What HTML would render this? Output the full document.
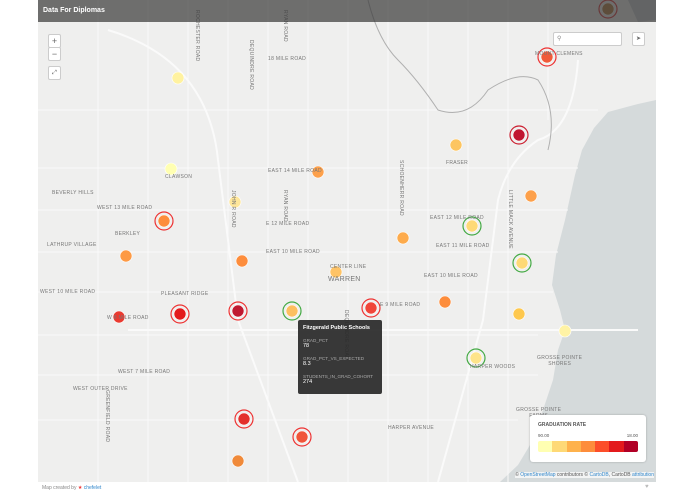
<!DOCTYPE html>
<html><head><meta charset="utf-8"><style>
*{margin:0;padding:0;box-sizing:border-box}
body{width:695px;height:494px;background:#fff;font-family:"Liberation Sans",sans-serif;position:relative;overflow:hidden}
#map{position:absolute;left:38px;top:0;width:618px;height:482px;background:#efefee;overflow:hidden}
#ov{position:absolute;left:0;top:0;width:656px;height:482px;overflow:hidden}
.lbl{position:absolute;font-size:5px;color:#777;letter-spacing:.3px;white-space:nowrap}
.v{writing-mode:vertical-rl}
#hdr{position:absolute;left:38px;top:0;width:618px;height:22px;background:rgba(60,60,60,.72);color:#fff;font-weight:bold;font-size:7px;padding:7px 5px}
.btn{position:absolute;background:#fff;border:1px solid #ccc;border-radius:2px;font-size:9px;color:#666;text-align:center;line-height:13px;width:13px;height:14px}
#tip{position:absolute;left:298px;top:320px;width:84px;height:74px;background:rgba(40,40,40,.92);border-radius:2px;color:#fff;font-size:5.5px;padding:5px 5px}
#tip .k{color:#aaa;font-size:4.6px;margin-top:7px}
#leg{position:absolute;left:530px;top:415px;width:116px;height:47px;background:#fff;border-radius:3px;box-shadow:0 0 2px rgba(0,0,0,.25);padding:7px 8px;font-size:5px;color:#555}
</style></head><body>
<div id="map">
<svg width="618" height="482" style="position:absolute;left:0;top:0">
<path d="M590 0 L618 0 L618 20 L600 22Z" fill="#c9cdcf"/>
<path d="M618 100 L600 104 L570 112 L556 128 L544 150 L537 175 L527 220 L518 255 L514 285 L522 310 L527 330 L520 350 L515 380 L505 410 L495 440 L480 465 L462 482 L618 482Z" fill="#d5dadb"/>
<g stroke="#fafafa" stroke-width="1" fill="none">
<path d="M0 110 H560 M0 168 H540 M0 210 H530 M0 252 H520 M0 292 H515 M0 335 H500 M0 375 H500 M0 420 H480"/>
<path d="M60 0 V482 M110 0V482 M150 0V482 M190 0V482 M230 0V482 M270 0V482 M310 0V482 M350 0V482 M390 0V482 M430 0V482 M470 0V482 M510 0V120"/>
<path d="M70 30 Q170 60 180 160 L200 320 L260 482" stroke-width="2"/>
<path d="M540 60 Q535 130 500 140 Q470 160 460 200 L445 320 L400 482" stroke-width="2"/>
<path d="M90 330 H380 L600 330" stroke-width="2"/>
</g>
<path d="M330 0 Q340 40 360 60 Q380 80 400 110 Q430 120 450 90 Q480 70 500 80 Q520 110 510 150" stroke="#b0b0b0" stroke-width="1" fill="none"/>
<g stroke-width="1.2">
<g fill="none"><circle cx="570" cy="9" r="9" stroke="#d33"/><circle cx="509" cy="57" r="9" stroke="#e33"/><circle cx="481" cy="135" r="9" stroke="#c23"/><circle cx="126" cy="221" r="9" stroke="#e33"/><circle cx="434" cy="226" r="9" stroke="#4a4"/><circle cx="484" cy="263" r="9" stroke="#4a4"/><circle cx="333" cy="308" r="9" stroke="#e33"/><circle cx="142" cy="314" r="9" stroke="#e33"/><circle cx="200" cy="311" r="9" stroke="#e33"/><circle cx="254" cy="311" r="9" stroke="#4a4"/><circle cx="438" cy="358" r="9" stroke="#4a4"/><circle cx="206" cy="419" r="9" stroke="#e33"/><circle cx="264" cy="437" r="9" stroke="#e33"/></g>
<g stroke="#fff" stroke-width=".6">
<circle cx="570" cy="9" r="6" fill="#b37a3a"/><circle cx="509" cy="57" r="6" fill="#f05a3a"/><circle cx="140" cy="78" r="6" fill="#fff2a0"/><circle cx="481" cy="135" r="6" fill="#c01530"/><circle cx="418" cy="145" r="6" fill="#fdc560"/><circle cx="133" cy="169" r="6" fill="#ffffb2"/><circle cx="280" cy="172" r="6" fill="#fda04a"/><circle cx="493" cy="196" r="6" fill="#fda04a"/><circle cx="197" cy="202" r="6" fill="#fee69a"/><circle cx="126" cy="221" r="6" fill="#fd8d3c"/><circle cx="434" cy="226" r="6" fill="#fed976"/><circle cx="365" cy="238" r="6" fill="#fdab4c"/><circle cx="88" cy="256" r="6" fill="#fd9a45"/><circle cx="204" cy="261" r="6" fill="#fd8d3c"/><circle cx="484" cy="263" r="6" fill="#fed976"/><circle cx="298" cy="272" r="6" fill="#fec366"/><circle cx="407" cy="302" r="6" fill="#fd8d3c"/><circle cx="333" cy="308" r="6" fill="#f0463a"/><circle cx="81" cy="317" r="6" fill="#ea3a30"/><circle cx="142" cy="314" r="6" fill="#e31a1c"/><circle cx="200" cy="311" r="6" fill="#c01a30"/><circle cx="254" cy="311" r="6" fill="#fdbf60"/><circle cx="481" cy="314" r="6" fill="#fec84e"/><circle cx="527" cy="331" r="6" fill="#fff3a5"/><circle cx="438" cy="358" r="6" fill="#fee48a"/><circle cx="206" cy="419" r="6" fill="#e3302c"/><circle cx="264" cy="437" r="6" fill="#f0553a"/><circle cx="200" cy="461" r="6" fill="#f08a3a"/>
</g></g>
</svg>
</div>
<div id="ov">
<div class="lbl" style="left:268px;top:168px">EAST 14 MILE ROAD</div>
<div class="lbl" style="left:266px;top:221px">E 12 MILE ROAD</div>
<div class="lbl" style="left:266px;top:249px">EAST 10 MILE ROAD</div>
<div class="lbl" style="left:330px;top:264px">CENTER LINE</div>
<div class="lbl" style="left:328px;top:276px;font-size:7px">WARREN</div>
<div class="lbl" style="left:97px;top:205px">WEST 13 MILE ROAD</div>
<div class="lbl" style="left:40px;top:289px">WEST 10 MILE ROAD</div>
<div class="lbl" style="left:107px;top:315px">W 8 MILE ROAD</div>
<div class="lbl" style="left:118px;top:369px">WEST 7 MILE ROAD</div>
<div class="lbl" style="left:73px;top:386px">WEST OUTER DRIVE</div>
<div class="lbl" style="left:161px;top:291px">PLEASANT RIDGE</div>
<div class="lbl" style="left:52px;top:190px">BEVERLY HILLS</div>
<div class="lbl" style="left:47px;top:242px">LATHRUP VILLAGE</div>
<div class="lbl" style="left:115px;top:231px">BERKLEY</div>
<div class="lbl" style="left:165px;top:174px">CLAWSON</div>
<div class="lbl" style="left:446px;top:160px">FRASER</div>
<div class="lbl" style="left:430px;top:215px">EAST 12 MILE ROAD</div>
<div class="lbl" style="left:424px;top:273px">EAST 10 MILE ROAD</div>
<div class="lbl" style="left:380px;top:302px">E 9 MILE ROAD</div>
<div class="lbl" style="left:436px;top:243px">EAST 11 MILE ROAD</div>
<div class="lbl" style="left:470px;top:364px">HARPER WOODS</div>
<div class="lbl" style="left:516px;top:407px;text-align:center">GROSSE POINTE<br>FARMS</div>
<div class="lbl" style="left:537px;top:355px;text-align:center">GROSSE POINTE<br>SHORES</div>
<div class="lbl" style="left:388px;top:425px">HARPER AVENUE</div>
<div class="lbl" style="left:535px;top:51px">MOUNT CLEMENS</div>
<div class="lbl" style="left:268px;top:56px">18 MILE ROAD</div>
<div class="lbl v" style="left:194px;top:10px">ROCHESTER ROAD</div>
<div class="lbl v" style="left:248px;top:40px">DEQUINDRE ROAD</div>
<div class="lbl v" style="left:282px;top:10px">RYAN ROAD</div>
<div class="lbl v" style="left:282px;top:190px">RYAN ROAD</div>
<div class="lbl v" style="left:230px;top:190px">JOHN R ROAD</div>
<div class="lbl v" style="left:398px;top:160px">SCHOENHERR ROAD</div>
<div class="lbl v" style="left:343px;top:310px">DEQUINDRE ROAD</div>
<div class="lbl v" style="left:104px;top:390px">GREENFIELD ROAD</div>
<div class="lbl v" style="left:507px;top:190px">LITTLE MACK AVENUE</div>
<div class="btn" style="left:48px;top:34px">+</div>
<div class="btn" style="left:48px;top:47px">−</div>
<div class="btn" style="left:48px;top:66px;font-size:6px">⤢</div>
<div style="position:absolute;left:553px;top:32px;width:69px;height:14px;background:#fff;border:1px solid #ccc;border-radius:2px;font-size:6px;color:#888;padding:2px 3px">⚲</div>
<div class="btn" style="left:632px;top:32px;font-size:6px">➤</div>
<div id="tip"><div style="font-weight:bold">Fitzgerald Public Schools</div>
<div class="k">GRAD_PCT</div><div>78</div>
<div class="k">GRAD_PCT_VS_EXPECTED</div><div>8.3</div>
<div class="k">STUDENTS_IN_GRAD_COHORT</div><div>274</div></div>
<div id="leg"><div style="font-weight:bold;font-size:5px">GRADUATION RATE</div>
<div style="display:flex;justify-content:space-between;margin-top:5px;font-size:4.5px"><span>90.00</span><span>18.00</span></div>
<div style="display:flex;height:11px;margin-top:3px;border-radius:2px;overflow:hidden"><div style="flex:1;background:#ffffb2"></div><div style="flex:1;background:#fed976"></div><div style="flex:1;background:#feb24c"></div><div style="flex:1;background:#fd8d3c"></div><div style="flex:1;background:#fc4e2a"></div><div style="flex:1;background:#e31a1c"></div><div style="flex:1;background:#b10026"></div></div></div>
<div style="position:absolute;right:2px;top:472px;font-size:5px;color:#555;background:rgba(255,255,255,.7)">© <span style="color:#38c">OpenStreetMap</span> contributors © <span style="color:#38c">CartoDB</span>, CartoDB <span style="color:#38c">attribution</span></div>
</div>
<div id="hdr">Data For Diplomas</div>
<div style="position:absolute;left:42px;top:485px;font-size:5px;color:#888">Map created by <span style="color:#e33">★</span> <span style="color:#38c">chefelet</span></div>
<div style="position:absolute;left:645px;top:484px;font-size:6px;color:#bbb">♥</div>
</body></html>
